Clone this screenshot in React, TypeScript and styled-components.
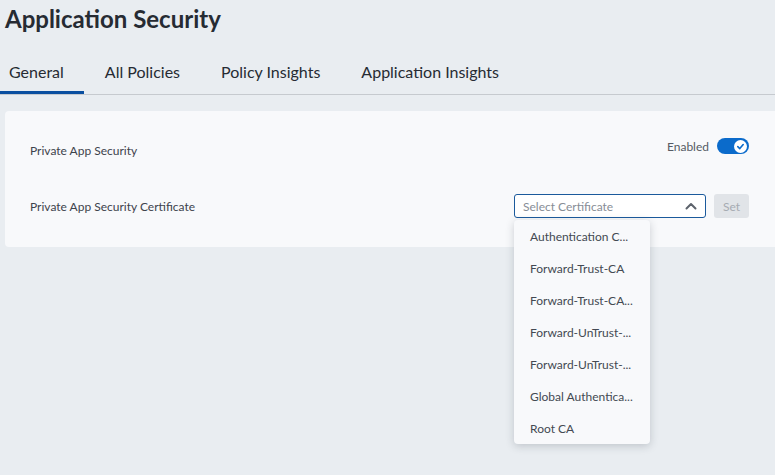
import styled, { createGlobalStyle } from "styled-components";

const GlobalStyle = createGlobalStyle`
  html, body {
    margin: 0;
    padding: 0;
    background: #e9edf1;
    font-family: Lato, "Open Sans", sans-serif;
    color: #262b33;
  }
`;

const Page = styled.div`
  width: 775px;
  height: 475px;
  overflow: hidden;
  display: flex;
  flex-direction: column;
`;

const Title = styled.h1`
  margin: 0;
  padding: 3px 0 0 5px;
  font-size: 24px;
  line-height: 32px;
  font-weight: 700;
  color: #262b33;
`;

const TabBar = styled.div`
  display: flex;
  margin-top: 17px;
  border-bottom: 1px solid #c6cacf;
`;

const Tab = styled.div<{ $active?: boolean; $first?: boolean }>`
  padding: 0 20.5px 4px ${(p) => (p.$first ? "9px" : "20.5px")};
  height: 42px;
  box-sizing: border-box;
  display: flex;
  align-items: center;
  font-size: 16px;
  color: #262b33;
  position: relative;
  &::after {
    content: "";
    position: absolute;
    left: 0;
    right: 0;
    bottom: 0;
    height: 3px;
    background: ${(p) => (p.$active ? "#0a4fa0" : "transparent")};
  }
`;

const Card = styled.div`
  margin: 16px 0 0 5px;
  padding: 11px 26px 13px 25px;
  background: #f8f9fb;
  border-radius: 4px 0 0 4px;
  display: flex;
  flex-direction: column;
`;

const Row = styled.div`
  height: 56px;
  display: flex;
  align-items: center;
  justify-content: space-between;
`;

const Label = styled.span`
  font-size: 12px;
  color: #3d434c;
`;

const SwitchGroup = styled.div`
  display: flex;
  align-items: center;
  gap: 8px;
  margin-bottom: 8px;
`;

const SwitchLabel = styled.span`
  font-size: 12px;
  color: #555b64;
`;

const Switch = styled.div`
  width: 32px;
  height: 16px;
  border-radius: 8px;
  background: #0b6bcb;
  display: flex;
  align-items: center;
  justify-content: flex-end;
  padding: 0 2px;
  box-sizing: border-box;
`;

const Knob = styled.div`
  width: 13px;
  height: 13px;
  border-radius: 50%;
  background: #fff;
  display: flex;
  align-items: center;
  justify-content: center;
`;

const Controls = styled.div`
  display: flex;
  align-items: center;
  gap: 8px;
  position: relative;
`;

const Select = styled.div`
  width: 192px;
  height: 24px;
  box-sizing: border-box;
  border: 1px solid #1b5a9c;
  border-radius: 3px;
  background: #fff;
  display: flex;
  align-items: center;
  justify-content: space-between;
  padding: 0 8px 0 8px;
`;

const Placeholder = styled.span`
  font-size: 12px;
  color: #878d96;
`;

const SetButton = styled.button`
  width: 35px;
  height: 24px;
  border: none;
  border-radius: 3px;
  background: #e1e4e8;
  color: #a6abb2;
  font-family: inherit;
  font-size: 12px;
  padding: 0;
`;

const Menu = styled.div`
  position: absolute;
  top: 26px;
  left: 0;
  width: 136px;
  background: #f8f9fb;
  border-radius: 4px;
  box-shadow: 0 2px 8px rgba(40, 50, 65, 0.22);
  z-index: 2;
`;

const MenuItem = styled.div`
  height: 32px;
  display: flex;
  align-items: center;
  padding: 0 16px;
  font-size: 12px;
  color: #434952;
  white-space: nowrap;
`;

const tabs = ["General", "All Policies", "Policy Insights", "Application Insights"];

const certificates = [
  "Authentication C...",
  "Forward-Trust-CA",
  "Forward-Trust-CA...",
  "Forward-UnTrust-...",
  "Forward-UnTrust-...",
  "Global Authentica...",
  "Root CA",
];

const App = () => {
  return (
    <Page>
      <GlobalStyle />
      <Title>Application Security</Title>
      <TabBar>
        {tabs.map((t, i) => (
          <Tab key={t} $active={i === 0} $first={i === 0}>
            {t}
          </Tab>
        ))}
      </TabBar>
      <Card>
        <Row>
          <Label>Private App Security</Label>
          <SwitchGroup>
            <SwitchLabel>Enabled</SwitchLabel>
            <Switch>
              <Knob>
                <svg width="9" height="9" viewBox="0 0 10 10">
                  <path
                    d="M2 5.2 L4.2 7.3 L8 2.8"
                    fill="none"
                    stroke="#0b6bcb"
                    strokeWidth="1.8"
                    strokeLinecap="round"
                    strokeLinejoin="round"
                  />
                </svg>
              </Knob>
            </Switch>
          </SwitchGroup>
        </Row>
        <Row>
          <Label>Private App Security Certificate</Label>
          <Controls>
            <Select>
              <Placeholder>Select Certificate</Placeholder>
              <svg width="12" height="8" viewBox="0 0 12 8">
                <path
                  d="M1.5 6.5 L6 2 L10.5 6.5"
                  fill="none"
                  stroke="#5d636c"
                  strokeWidth="2"
                  strokeLinecap="round"
                  strokeLinejoin="round"
                />
              </svg>
            </Select>
            <SetButton>Set</SetButton>
            <Menu>
              {certificates.map((c, i) => (
                <MenuItem key={i}>{c}</MenuItem>
              ))}
            </Menu>
          </Controls>
        </Row>
      </Card>
    </Page>
  );
};

export default App;
